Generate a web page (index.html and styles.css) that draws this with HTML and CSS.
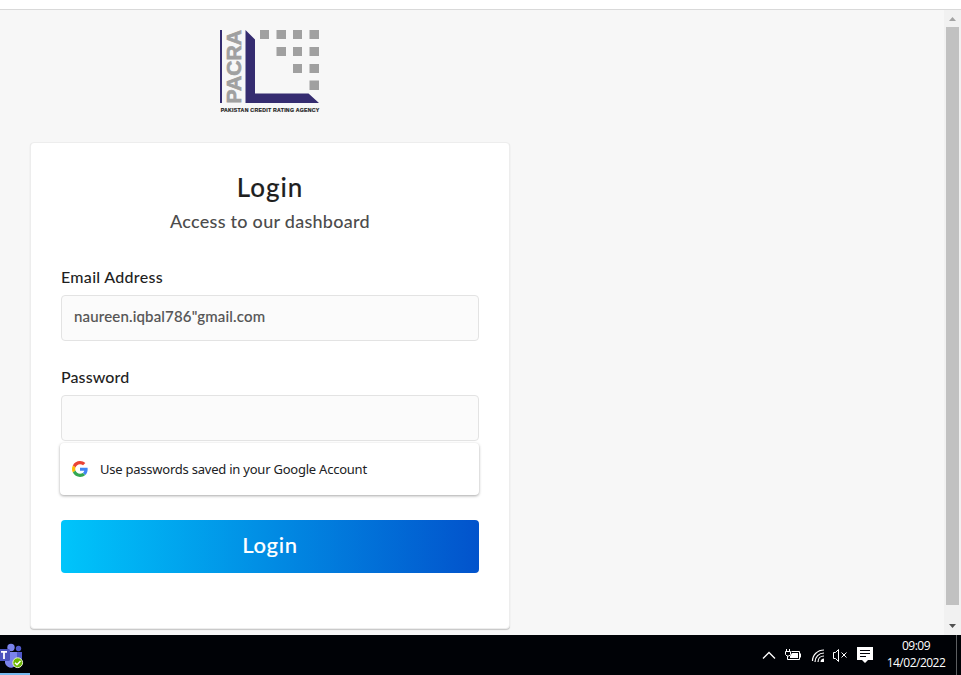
FILE: index.html
```html
<!DOCTYPE html>
<html lang="en">
<head>
<meta charset="utf-8">
<title>Login</title>
<link rel="stylesheet" href="styles.css">
</head>
<body>
<div class="topline"></div>
<div class="viewport">
  <main class="page">
    <svg class="logo" width="104" height="88" viewBox="218 28 104 88" role="img" aria-label="PACRA">
      <path fill="#352c70" d="M220 30h2v73h-2zM245.500 30l9.500 9.500v54h53.500l10.500 9.500h-73.500z"/>
      <path fill="#a0a0a0" d="M260 30h9v9h-9zM276.500 30h9.500v9h-9.500zM293 30h9v9h-9zM309.500 30h9.500v9h-9.500zM276.500 47h9.500v9h-9.500zM293 47h9v9h-9zM309.500 47h9.500v9h-9.500zM293 64h9v9h-9zM309.500 64h9.500v9h-9.500zM309.500 80.500h9.500v9.500h-9.500z"/>
      <text class="logo-name" transform="translate(241.300 103.500) rotate(-90)" textLength="73.500" lengthAdjust="spacingAndGlyphs">PACRA</text>
      <text class="logo-caption" x="220.700" y="111.800" textLength="98.600" lengthAdjust="spacing">PAKISTAN CREDIT RATING AGENCY</text>
    </svg>
    <section class="card">
      <h1 class="title">Login</h1>
      <p class="subtitle">Access to our dashboard</p>
      <form class="form">
        <label class="label label-email" for="email">Email Address</label>
        <input class="input" id="email" type="text" value="naureen.iqbal786&quot;gmail.com">
        <div class="password">
          <label class="label label-password" for="pw">Password</label>
          <input class="input" id="pw" type="password">
          <div class="suggestion">
            <svg width="16" height="16" viewBox="0 0 48 48" aria-hidden="true">
              <path fill="#ea4335" d="M24 9.500c3.540 0 6.710 1.220 9.210 3.600l6.850-6.850C35.900 2.380 30.470 0 24 0 14.620 0 6.510 5.380 2.560 13.220l7.980 6.190C12.430 13.720 17.740 9.500 24 9.500z"/>
              <path fill="#4285f4" d="M46.980 24.550c0-1.570-.15-3.090-.38-4.550H24v9.020h12.940c-.58 2.960-2.260 5.480-4.780 7.180l7.730 6c4.510-4.180 7.090-10.360 7.090-17.650z"/>
              <path fill="#fbbc05" d="M10.530 28.590A14.500 14.500 0 0 1 9.770 24c0-1.600.27-3.140.76-4.590l-7.980-6.190A24 24 0 0 0 0 24c0 3.880.92 7.540 2.560 10.780z"/>
              <path fill="#34a853" d="M24 48c6.480 0 11.930-2.130 15.890-5.810l-7.730-6C30 37.650 27.240 38.500 24 38.500c-6.260 0-11.570-4.220-13.470-9.910l-7.980 6.190C6.510 42.620 14.620 48 24 48z"/>
            </svg>
            <span>Use passwords saved in your Google Account</span>
          </div>
        </div>
        <button class="submit" type="button">Login</button>
      </form>
    </section>
  </main>
  <div class="scrollbar">
    <svg width="17" height="17" viewBox="0 0 17 17" aria-hidden="true"><path fill="#a3a3a3" d="M5 11l3.500-4 3.500 4z"/></svg>
    <div class="thumb"></div>
    <svg width="17" height="17" viewBox="0 0 17 17" aria-hidden="true"><path fill="#505050" d="M5 6h7l-3.500 4z"/></svg>
  </div>
</div>
<footer class="taskbar">
  <div class="teams">
    <svg width="30" height="37" viewBox="0 635 30 37" aria-hidden="true">
      <circle cx="18.500" cy="648.500" r="2.700" fill="#5059c9"/>
      <path fill="#5059c9" d="M15 652h7v8a5 5 0 0 1-7 3z"/>
      <circle cx="11" cy="647.500" r="3.700" fill="#7b83eb"/>
      <path fill="#7b83eb" d="M5 652h12v8a6 6 0 0 1-12 3z"/>
      <path fill="#4b53bc" d="M0 649h8.500a1.500 1.500 0 0 1 1.500 1.500v9a1.500 1.500 0 0 1-1.500 1.500h-8.500z"/>
      <path stroke="#fff" stroke-width="1.800" d="M1 651.800h6M4 652v7"/>
      <circle cx="17.700" cy="662.700" r="4.900" fill="#6bb700" stroke="#e8f2d5"/>
      <path fill="none" stroke="#fff" stroke-width="1.500" d="M15 662.700l2 2 3.500-3.700"/>
    </svg>
  </div>
  <svg class="tray" width="114" height="40" viewBox="760 635 114 40" fill="none" stroke="#fff" aria-hidden="true">
    <path stroke-width="1.300" d="M763 658.500l6-6 6 6"/>
    <path d="M786.500 649v3M789.500 649v3M785.500 651.500h5v3l-1.500 1.500h-2l-1.500-1.500zM787.500 656v3.500h12v-8h-8M800.500 653.500v4"/>
    <path fill="#fff" stroke="none" d="M792 653h6v5h-8v-2z"/>
    <path stroke-width="1.200" d="M812.500 661c0-6 5-11 11.500-11M815 662c0-5 4-9 9-9M818 662c0-3.500 2.500-6 6-6"/>
    <path fill="#fff" stroke="none" d="M820.500 662c0-2 1.500-3.500 3.500-3.500v3.500z"/>
    <path d="M833.500 652.500h2l3-3v12l-3-3h-2zM841.500 652.500l5 5M846.500 652.500l-5 5"/>
    <path fill="#fff" stroke="none" d="M857 647h16v13h-5l-3 3-3-3h-5z"/>
    <path stroke="#000206" d="M860 650.500h10M860 653.500h10M860 656.500h6"/>
  </svg>
  <div class="clock"><span>09:09</span><span>14/02/2022</span></div>
  <div class="show-desktop"></div>
</footer>
</body>
</html>
```
FILE: styles.css
```css
* { box-sizing: border-box; }
body {
  margin: 0;
  height: 675px;
  display: flex;
  flex-direction: column;
  overflow: hidden;
  background: #f7f7f7;
  color: #1f1f1f;
  font-family: Lato, "Liberation Sans", sans-serif;
}
.topline { height: 10px; background: #fff; border-bottom: 1px solid #d9d9d9; }
.viewport { height: 625px; display: flex; }
.page { flex: 1; padding: 18px 0 0 30px; }
.logo { display: block; margin: 0 0 26px 188px; }
.logo-name { font: bold 21px "Liberation Sans", sans-serif; fill: #a0a0a0; stroke: #a0a0a0; stroke-width: .7px; }
.logo-caption { font: bold 5.200px "Liberation Sans", sans-serif; fill: #222; stroke: #222; stroke-width: .2px; }
.card {
  width: 480px;
  height: 487px;
  padding: 28px 30px;
  background: #fff;
  border: 1px solid #ededed;
  border-radius: 4px;
  box-shadow: 0 1px 1px rgba(0, 0, 0, .2);
}
.title { margin: 0; height: 32px; line-height: 32px; font-size: 26px; font-weight: 500; text-align: center; letter-spacing: 1px; -webkit-text-stroke: .12px; }
.subtitle { margin: 4px 0 0; height: 28px; line-height: 28px; font-size: 18px; font-weight: 500; text-align: center; color: #4c4c4c; letter-spacing: .27px; }
.form { margin: 30px 0 0; }
.label { display: block; height: 24px; line-height: 24px; margin-bottom: 6px; font-size: 16px; font-weight: 500; letter-spacing: .1px; }
.label-email { letter-spacing: .3px; }
.input {
  display: block;
  width: 100%;
  height: 46px;
  padding: 0 12px 4px;
  background: #fbfbfb;
  border: 1px solid #e3e3e3;
  border-radius: 4px;
  font: 500 15px Lato, sans-serif;
  letter-spacing: .17px;
  -webkit-text-stroke: .12px;
  color: #555;
}
.password { position: relative; margin-top: 24px; }
.suggestion {
  position: absolute;
  top: 78px;
  left: -1px;
  width: 419px;
  height: 52px;
  display: flex;
  align-items: center;
  gap: 12px;
  padding-left: 12px;
  background: #fff;
  border-radius: 4px;
  box-shadow: 0 1px 3px rgba(0, 0, 0, .35);
  font: 13px "Noto Sans", sans-serif;
  letter-spacing: -.23px;
  color: #202124;
}
.submit {
  display: block;
  width: 100%;
  height: 53px;
  margin-top: 79px;
  padding: 0 0 4px;
  border: 0;
  border-radius: 4px;
  background: linear-gradient(to right, #00c5fb, #0253cc);
  color: #fff;
  font: 500 22px Lato, sans-serif;
  letter-spacing: .7px;
  -webkit-text-stroke: .12px;
}
.scrollbar { width: 17px; background: #f1f1f1; display: flex; flex-direction: column; }
.scrollbar svg { display: block; flex: none; }
.thumb { height: 578px; margin: 0 2px 13px; background: #c1c1c1; }
.taskbar { height: 40px; background: #000206; display: flex; color: #fff; }
.teams { width: 30px; height: 40px; border-bottom: 2px solid #76b9ed; }
.teams svg, .tray { display: block; }
.tray { margin-left: 730px; }
.clock { width: 82px; padding: 2px 0 0 2px; display: flex; flex-direction: column; align-items: center; font: 12px/17px "Open Sans", sans-serif; letter-spacing: -.5px; }
.show-desktop { border-left: 1px solid #5c5e61; flex: 1; }
```
